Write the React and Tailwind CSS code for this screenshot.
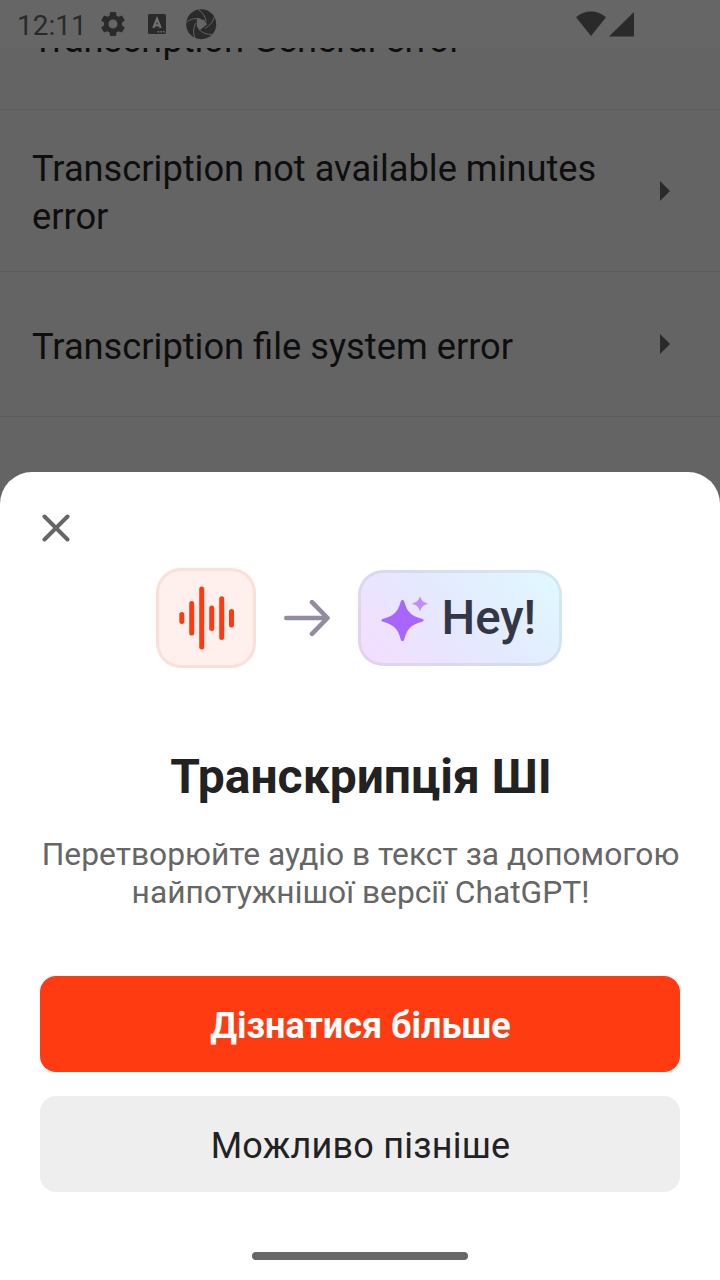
const BLADE_ANGLES = [0, 72, 144, 216, 288];

function StatusBar() {
  return (
    <header className="flex h-12 shrink-0 items-center bg-[#666666] pl-[17px] text-[#2a2a2a]">
      <span className="w-[69px] whitespace-nowrap pt-1 text-[28px] leading-8">12:11</span>
      <svg className="ml-[12px] h-[30px] w-[30px]" viewBox="0 0 24 24" fill="currentColor">
        <path d="M19.14 12.94c.04-.3.06-.61.06-.94 0-.32-.02-.64-.07-.94l2.03-1.58a.49.49 0 0 0 .12-.61l-1.92-3.32a.49.49 0 0 0-.59-.22l-2.39.96c-.5-.38-1.03-.7-1.62-.94l-.36-2.54a.48.48 0 0 0-.48-.41h-3.84c-.24 0-.43.17-.47.41l-.36 2.54c-.59.24-1.13.57-1.62.94l-2.39-.96a.48.48 0 0 0-.59.22L2.74 8.87c-.12.21-.08.47.12.61l2.03 1.58c-.05.3-.09.63-.09.94s.02.64.07.94l-2.03 1.58a.49.49 0 0 0-.12.61l1.92 3.32c.12.22.37.29.59.22l2.39-.96c.5.38 1.03.7 1.62.94l.36 2.54c.05.24.24.41.48.41h3.84c.24 0 .44-.17.47-.41l.36-2.54c.59-.24 1.13-.56 1.62-.94l2.39.96c.22.08.47 0 .59-.22l1.92-3.32a.49.49 0 0 0-.12-.61zM12 15.6A3.6 3.6 0 1 1 12 8.4a3.6 3.6 0 0 1 0 7.2z" />
      </svg>
      <svg className="ml-5 h-5 w-[18px]" viewBox="0 0 18 20">
        <rect width="18" height="20" rx="1.5" fill="#2a2a2a" />
        <path d="M5.300 14 9 5l3.700 9M6.500 11.300h5" fill="none" stroke="#707070" strokeWidth="2.200" />
        <path d="M9.600 17h1.600v1.600H9.600zM12.400 17H14v1.600h-1.600zM15.100 17h1.600v1.600h-1.600z" fill="#707070" />
      </svg>
      <svg className="ml-5 h-[31px] w-[31px]" viewBox="0 0 31 31">
        <circle cx="15.200" cy="15.200" r="15" fill="#2a2a2a" />
        <path d="M10.800 9.500 18 11l3.200 4.200-7.500 6-2.900-4z" fill="#666666" />
        <g fill="none" stroke="#666666" strokeWidth="0.900">
          {BLADE_ANGLES.map((angle) => (
            <path key={angle} d="M.5 13.500C4 10 9.500 8.800 14.500 9.700" transform={`rotate(${angle} 15.200 15.200)`} />
          ))}
        </g>
      </svg>
      <svg className="ml-[359px] h-[26px] w-[60px]" viewBox="0 0 60 26" fill="currentColor">
        <path d="M0 6.300a22.500 22.500 0 0 1 30 0L15 25z" />
        <path d="M33 25.500 58 1v24.500z" />
      </svg>
    </header>
  );
}

function Row({ children, className }) {
  return (
    <div className={`flex shrink-0 items-center border-b border-[#5c5c5c] pl-8 pr-[50px] text-[#0e0e0e] ${className}`}>
      <p className="flex-1 pr-10 pt-[5px] text-[36.25px] leading-[48px]">{children}</p>
      <svg className="h-5 w-[10px]" viewBox="0 0 10 20">
        <path d="M0 0v20l10-10z" fill="#2a2a2a" />
      </svg>
    </div>
  );
}

function Illustration() {
  return (
    <div className="flex h-[100px] items-center pl-[156px]">
      <div className="flex h-[100px] w-[100px] items-center justify-center rounded-[25px] border-[3px] border-[#fbdfda] bg-[#fff0ee]">
        <svg className="h-16 w-14" viewBox="0 0 56 64" fill="none" stroke="#ff3a12" strokeWidth="5" strokeLinecap="round">
          <path d="M3.800 28.500v7M13.700 17.500v29.500M23.700 3v58M33.700 22v20.500M43.700 12.800v38.700M53.500 25.500v13.500" />
        </svg>
      </div>
      <svg className="ml-7 h-[38px] w-[46px]" viewBox="0 0 46 38" fill="none" stroke="#948ba0" strokeWidth="4.600" strokeLinecap="round" strokeLinejoin="round">
        <path d="M2.300 19h41M28 3.200 43.500 19 28 34.800" />
      </svg>
      <div className="ml-[27.5px] flex h-[96px] w-[204.5px] items-center rounded-[25px] border-[3px] border-[#29425c14] bg-[linear-gradient(45deg,#f5ddff_0%,#e4e9fe_50%,#e0faff_100%)] bg-origin-border pl-5">
        <svg className="mt-1 h-12 w-12" viewBox="0 0 48 48">
          <path d="M21.500 4c1 0 1.400.6 1.700 1.500 3 10.500 6.500 14 17.500 17.300 2.600.7 2.600 2.200 0 2.900C29.700 29 26.200 32.500 23.200 43.500c-.5 2.300-2.800 2.300-3.400 0-3-11-6.500-14.500-17.500-17.800-2.600-.7-2.600-2.200 0-2.900C13.300 19.500 16.800 16 19.800 5.500c.3-.9.7-1.500 1.700-1.500z" fill="#a865ff" />
          <path d="M39 0c1.500 5 3.200 6.300 8.500 7.700C42.200 9.100 40.500 10.500 39 15.500 37.500 10.500 35.800 9.100 30.500 7.700 35.800 6.300 37.500 5 39 0z" fill="#bd8dff" />
        </svg>
        <span className="ml-[13px] text-[47.5px] font-medium leading-[56px] text-[#333644]">Hey!</span>
      </div>
    </div>
  );
}

export default function App() {
  return (
    <div className="flex h-[1280px] w-[720px] flex-col overflow-hidden bg-[#646464] font-['Roboto',sans-serif]">
      <StatusBar />
      <main className="flex h-[424px] shrink-0 flex-col overflow-hidden">
        <Row className="-mt-[83px] h-[145px]">Transcription General error</Row>
        <Row className="h-[162px]">Transcription not available minutes error</Row>
        <Row className="h-[145px]">Transcription file system error</Row>
      </main>
      <section className="flex h-[808px] shrink-0 flex-col rounded-t-[32px] bg-white">
        <button aria-label="Закрити" className="ml-8 mt-8 flex h-12 w-12 items-center justify-center">
          <svg className="h-7 w-7" viewBox="0 0 28 28" fill="none" stroke="#666666" strokeWidth="4" strokeLinecap="round">
            <path d="m2.500 2.500 23 23M25.500 2.500l-23 23" />
          </svg>
        </button>
        <div className="mt-4">
          <Illustration />
        </div>
        <h1 className="mt-[81px] pl-0.5 text-center text-[48px] font-bold leading-[56px] text-[#222222]">Транскрипція ШІ</h1>
        <p className="mt-[31px] pl-px text-center text-[31.75px] leading-[38px] text-[#666666]">
          Перетворюйте аудіо в текст за допомогою
          <br />
          найпотужнішої версії ChatGPT!
        </p>
        <div className="mt-auto flex flex-col gap-6 px-10">
          <button className="h-24 rounded-2xl bg-[#ff3b12] pl-px pt-1 text-[36px] font-bold text-white">Дізнатися більше</button>
          <button className="h-24 rounded-2xl bg-[#eeeeee] pl-px pt-1 text-[36px] tracking-[0.22px] text-[#222222]">Можливо пізніше</button>
        </div>
        <div className="mb-5 mt-[60px] h-2 w-[216px] self-center rounded-full bg-[#666666]" />
      </section>
    </div>
  );
}
